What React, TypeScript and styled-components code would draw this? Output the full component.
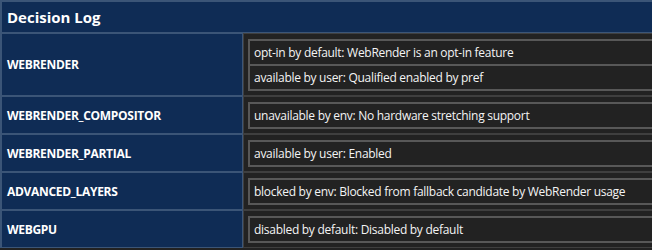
import styled, { createGlobalStyle } from "styled-components";

const GlobalStyle = createGlobalStyle`
  html, body {
    margin: 0;
    overflow: hidden;
    background: #222222;
  }
  body {
    font-family: "Open Sans", "Noto Sans", sans-serif;
    color: #f4f4f4;
  }
`;

const LogTable = styled.table`
  width: 100%;
  table-layout: fixed;
  border-collapse: separate;
  border-spacing: 0;
  border-top: 1px solid #3b5577;
  border-left: 1px solid #3b5577;
`;

const TitleCell = styled.th`
  background: #0f2c55;
  border: 1px solid #3b5577;
  border-right: none;
  padding: 4px 5px;
  text-align: left;
  font-size: 15px;
  font-weight: 700;
  line-height: 22px;
  color: #ffffff;
`;

const FeatureCell = styled.th`
  background: #0f2c55;
  border: 1px solid #3b5577;
  padding: 0 5px;
  text-align: left;
  vertical-align: middle;
  font-size: 12px;
  font-weight: 700;
  letter-spacing: -0.3px;
  color: #ffffff;
  white-space: nowrap;
`;

const EntriesCell = styled.td`
  background: #222222;
  border: 1px solid #3f3f3f;
  border-right: none;
  padding: 5px 0 4px 4px;
`;

const EntryList = styled.table`
  width: 100%;
  border-collapse: separate;
  border-spacing: 0;
  border: 1px solid #585858;
  border-right: none;
`;

const Entry = styled.td`
  border: 1px solid #585858;
  border-right: none;
  padding: 3px 4px;
  font-size: 12px;
  line-height: 17px;
  letter-spacing: -0.28px;
  white-space: nowrap;
`;

type Decision = { feature: string; log: string[] };

const decisions: Decision[] = [
  {
    feature: "WEBRENDER",
    log: [
      "opt-in by default: WebRender is an opt-in feature",
      "available by user: Qualified enabled by pref",
    ],
  },
  { feature: "WEBRENDER_COMPOSITOR", log: ["unavailable by env: No hardware stretching support"] },
  { feature: "WEBRENDER_PARTIAL", log: ["available by user: Enabled"] },
  { feature: "ADVANCED_LAYERS", log: ["blocked by env: Blocked from fallback candidate by WebRender usage"] },
  { feature: "WEBGPU", log: ["disabled by default: Disabled by default"] },
];

export default function App() {
  return (
    <>
      <GlobalStyle />
      <LogTable>
        <colgroup>
          <col style={{ width: 242 }} />
          <col />
        </colgroup>
        <tbody>
          <tr>
            <TitleCell colSpan={2}>Decision Log</TitleCell>
          </tr>
          {decisions.map((d) => (
            <tr key={d.feature}>
              <FeatureCell>{d.feature}</FeatureCell>
              <EntriesCell>
                <EntryList>
                  <tbody>
                    {d.log.map((line) => (
                      <tr key={line}>
                        <Entry>{line}</Entry>
                      </tr>
                    ))}
                  </tbody>
                </EntryList>
              </EntriesCell>
            </tr>
          ))}
        </tbody>
      </LogTable>
    </>
  );
}
